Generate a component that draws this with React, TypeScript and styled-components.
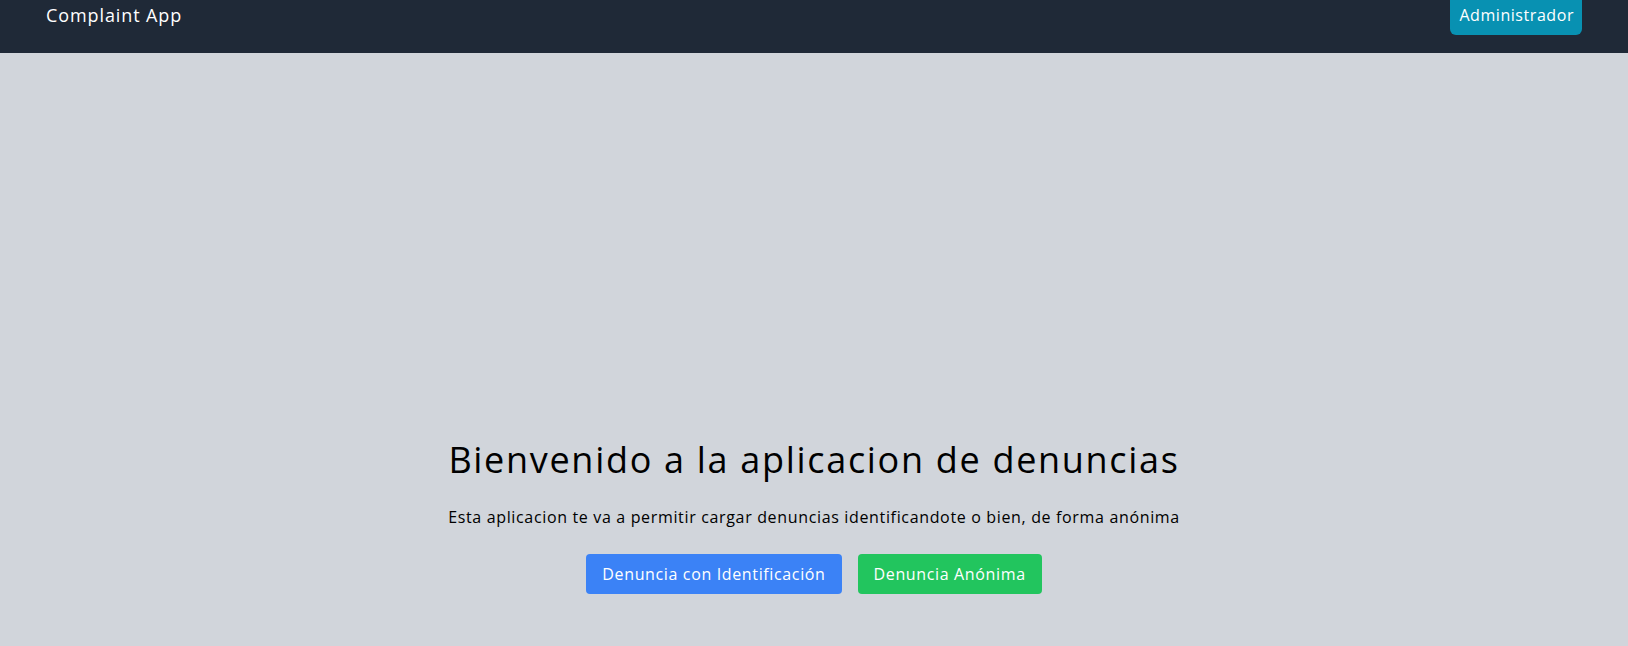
import React from "react";
import styled, { createGlobalStyle } from "styled-components";

const GlobalStyle = createGlobalStyle`
  * { box-sizing: border-box; }
  html, body { margin: 0; padding: 0; }
  body {
    font-family: "Open Sans", "Noto Sans", sans-serif;
    background: #d1d5db;
    color: #000;
  }
`;

const Page = styled.div`
  min-height: 100vh;
  display: flex;
  flex-direction: column;
  background: #d1d5db;
`;

const NavBar = styled.nav`
  height: 53px;
  background: #1f2937;
  display: flex;
  align-items: center;
  justify-content: space-between;
  padding: 0 46px 23px 46px;
`;

const Brand = styled.span`
  color: #ffffff;
  font-size: 18px;
  line-height: 28px;
  letter-spacing: 0.05em;
`;

const AdminButton = styled.button`
  flex: none;
  height: 40px;
  padding: 0 8px 0 9px;
  border: none;
  border-radius: 6px;
  background: #0891b2;
  color: #ffffff;
  font-family: inherit;
  font-size: 16px;
  letter-spacing: 0.035em;
  cursor: pointer;
`;

const Hero = styled.main`
  flex: 1;
  display: flex;
  flex-direction: column;
  align-items: center;
  justify-content: flex-end;
  padding-bottom: 52px;
`;

const Title = styled.h1`
  margin: 0 0 25px;
  font-size: 36px;
  line-height: 40px;
  font-weight: 400;
  letter-spacing: 0.047em;
`;

const Subtitle = styled.p`
  margin: 0 0 25px;
  font-size: 16px;
  line-height: 24px;
  letter-spacing: 0.041em;
`;

const Actions = styled.div`
  display: flex;
  gap: 16px;
`;

const ActionButton = styled.button<{ $tone: "blue" | "green" }>`
  height: 40px;
  padding: 0 16px;
  border: none;
  border-radius: 4px;
  background: ${(p) => (p.$tone === "blue" ? "#3b82f6" : "#22c55e")};
  color: #ffffff;
  font-family: inherit;
  font-size: 16px;
  letter-spacing: 0.04em;
  cursor: pointer;
`;

export default function App() {
  return (
    <>
      <GlobalStyle />
      <Page>
        <NavBar>
          <Brand>Complaint App</Brand>
          <AdminButton>Administrador</AdminButton>
        </NavBar>
        <Hero>
          <Title>Bienvenido a la aplicacion de denuncias</Title>
          <Subtitle>
            Esta aplicacion te va a permitir cargar denuncias identificandote o bien, de forma anónima
          </Subtitle>
          <Actions>
            <ActionButton $tone="blue">Denuncia con Identificación</ActionButton>
            <ActionButton $tone="green">Denuncia Anónima</ActionButton>
          </Actions>
        </Hero>
      </Page>
    </>
  );
}
